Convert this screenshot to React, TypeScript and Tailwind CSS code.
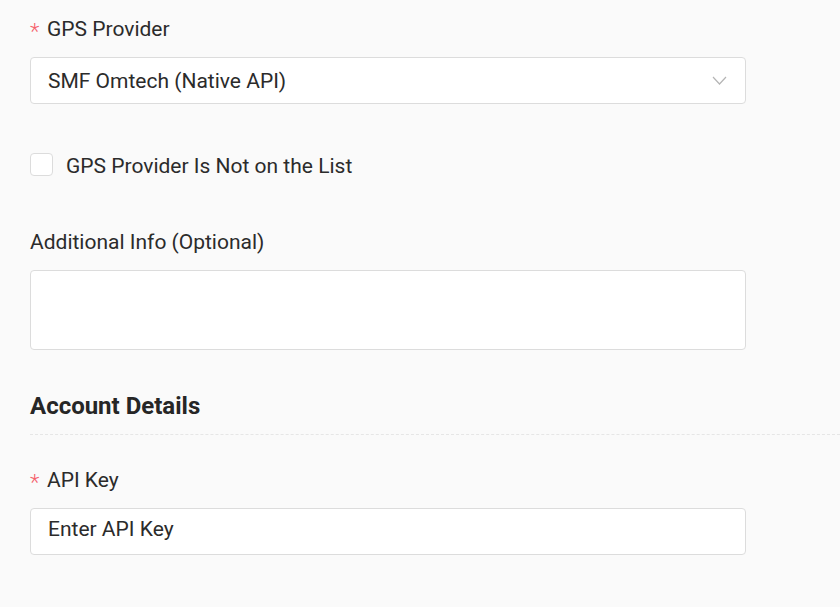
import React from "react";

const Label = ({ text, required }: { text: string; required?: boolean }) => (
  <div className="flex items-center h-[28px] text-[21px] leading-[28px] text-[#2b2b2b]">
    {required && (
      <span className="text-[#f5606a] text-[22px] leading-[28px] mr-[5px] w-[12px] pt-[5px] font-light">*</span>
    )}
    {text}
  </div>
);

const ChevronDown = () => (
  <svg width="15" height="9" viewBox="0 0 15 9" fill="none">
    <path d="M1 1l6.5 7L14 1" stroke="#b5b5b5" strokeWidth="1.2" />
  </svg>
);

export default function App() {
  return (
    <div
      className="min-h-screen bg-[#fafafa] pl-[30px] pt-[15px] text-[#2b2b2b]"
      style={{ fontFamily: "Roboto, 'Noto Sans', sans-serif" }}
    >
      <div className="w-[716px]">
        <Label text="GPS Provider" required />
        <div className="mt-[14px] h-[47px] flex items-center justify-between bg-white border border-[#dcdcdc] rounded-[4px] pl-[17px] pr-[18px] text-[21px] leading-[28px]">
          <span>SMF Omtech (Native API)</span>
          <ChevronDown />
        </div>

        <label className="mt-[49px] h-[23px] flex items-center gap-[13px] text-[21px] leading-[23px]">
          <span className="w-[23px] h-[23px] bg-white border border-[#dcdcdc] rounded-[4px]" />
          <span className="pt-[4px]">GPS Provider Is Not on the List</span>
        </label>

        <div className="mt-[52px]">
          <Label text="Additional Info (Optional)" />
        </div>
        <div className="mt-[14px] h-[80px] bg-white border border-[#dcdcdc] rounded-[4px]" />

        <h2 className="mt-[41px] h-[30px] flex items-center text-[24px] leading-[30px] font-bold text-[#262626]">
          Account Details
        </h2>
      </div>
      <div className="mt-[13px] border-t border-dashed border-[#e6e6e6]" />

      <div className="w-[716px]">
        <div className="mt-[31px]">
          <Label text="API Key" required />
        </div>
        <div className="mt-[14px] h-[47px] flex items-center bg-white border border-[#dcdcdc] rounded-[4px] pl-[17px] pb-[5px] text-[21px] leading-[28px]">
          Enter API Key
        </div>
      </div>
    </div>
  );
}
